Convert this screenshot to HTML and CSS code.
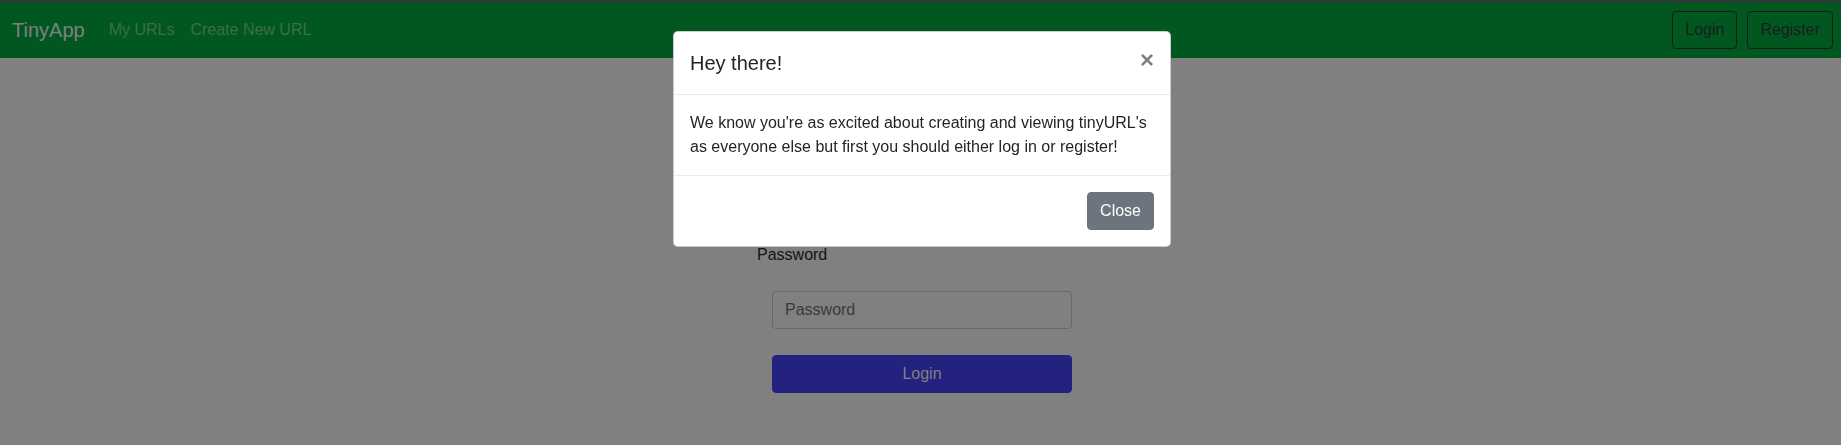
FILE: index.html
```html
<!DOCTYPE html>
<html lang="en">
<head>
<meta charset="utf-8">
<title>TinyApp</title>
<link rel="stylesheet" href="styles.css">
</head>
<body class="modal-open">
<div class="topstrip"></div>
<nav class="navbar">
  <a class="brand" href="#">TinyApp</a>
  <ul class="nav-links">
    <li><a href="#">My URLs</a></li>
    <li><a href="#">Create New URL</a></li>
  </ul>
  <div class="nav-actions">
    <button class="btn-outline">Login</button>
    <button class="btn-outline">Register</button>
  </div>
</nav>
<main class="main">
  <form class="login-form">
    <h1 class="page-title">Login</h1>
    <label class="field-label">Email</label>
    <input class="field-input" type="email" placeholder="Email">
    <label class="field-label">Password</label>
    <input class="field-input" type="password" placeholder="Password">
    <button class="btn-submit" type="button">Login</button>
  </form>
</main>
<div class="modal">
  <div class="modal-content">
    <div class="modal-header">
      <h5 class="modal-title">Hey there!</h5>
      <button class="close" type="button">&times;</button>
    </div>
    <div class="modal-body">We know you're as excited about creating and viewing tinyURL's as everyone else but first you should either log in or register!</div>
    <div class="modal-footer">
      <button class="btn-secondary" type="button">Close</button>
    </div>
  </div>
</div>
</body>
</html>
```
FILE: styles.css
```css
/* Page colours are shown as dimmed by the modal backdrop (50% black). */
* { box-sizing: border-box; }
html, body { margin: 0; padding: 0; }
body {
  font-family: "Liberation Sans", Arial, sans-serif;
  font-size: 16px;
  line-height: 24px;
  color: #111315;
  background: #808080;
  height: 445px;
  overflow: hidden;
}
.topstrip { height: 2px; background: #373737; }
.navbar {
  height: 56px;
  background: #005820;
  display: flex;
  align-items: center;
  padding: 0 8px 0 12px;
}
.brand {
  color: #808080;
  font-size: 20px;
  line-height: 30px;
  text-decoration: none;
  margin-right: 16px;
}
.nav-links { list-style: none; margin: 0; padding: 0; display: flex; }
.nav-links a {
  display: block;
  padding: 8px;
  color: #3f6c4b;
  text-decoration: none;
}
.nav-actions { margin-left: auto; display: flex; gap: 10px; }
.btn-outline {
  font-family: inherit;
  font-size: 16px;
  line-height: 24px;
  padding: 6px 12px;
  background: transparent;
  border: 1px solid #1a1d20;
  color: #1a1d20;
  border-radius: 4px;
}
.main { display: flex; justify-content: center; padding-left: 3px; }
.login-form { width: 330px; display: flex; flex-direction: column; align-items: flex-start; }
.page-title { font-size: 32px; line-height: 40px; font-weight: 500; margin: 24px 0 9px 0; }
.field-label { display: block; }
.field-input {
  margin: 24px 0 26px 15px;
  width: 300px;
  height: 38px;
  padding: 6px 12px;
  font-family: inherit;
  font-size: 16px;
  background: #808080;
  border: 1px solid #676a6d;
  border-radius: 4px;
  color: #25282b;
}
.field-input::placeholder { color: #363b3f; }
.btn-submit {
  margin-left: 15px;
  width: 300px;
  height: 38px;
  font-family: inherit;
  font-size: 16px;
  color: #808080;
  background: #24227f;
  border: 1px solid #24227f;
  border-radius: 4px;
}
.modal {
  position: fixed;
  top: 0; left: 0; right: 0; bottom: 0;
  z-index: 1050;
  display: flex;
  justify-content: center;
  align-items: flex-start;
  padding-top: 31px;
  padding-left: 3px;
}
.modal-content {
  width: 498px;
  background: #fff;
  border: 1px solid rgba(0,0,0,.2);
  border-radius: 5px;
  color: #212529;
}
.modal-header {
  display: flex;
  align-items: flex-start;
  padding: 16px;
  border-bottom: 1px solid #e9ecef;
}
.modal-title { margin: 0; font-size: 20px; line-height: 30px; font-weight: 500; }
.close {
  margin: -16px -16px -16px auto;
  padding: 16px;
  background: transparent;
  border: 0;
  font-family: inherit;
  font-size: 24px;
  font-weight: 700;
  line-height: 24px;
  color: #000;
  opacity: .5;
  text-shadow: 0 1px 0 #fff;
}
.modal-body { padding: 16px; }
.modal-footer {
  display: flex;
  justify-content: flex-end;
  padding: 16px;
  border-top: 1px solid #e9ecef;
}
.btn-secondary {
  font-family: inherit;
  font-size: 16px;
  line-height: 24px;
  padding: 6px 12px;
  color: #fff;
  background: #6c757d;
  border: 1px solid #6c757d;
  border-radius: 4px;
}
```
